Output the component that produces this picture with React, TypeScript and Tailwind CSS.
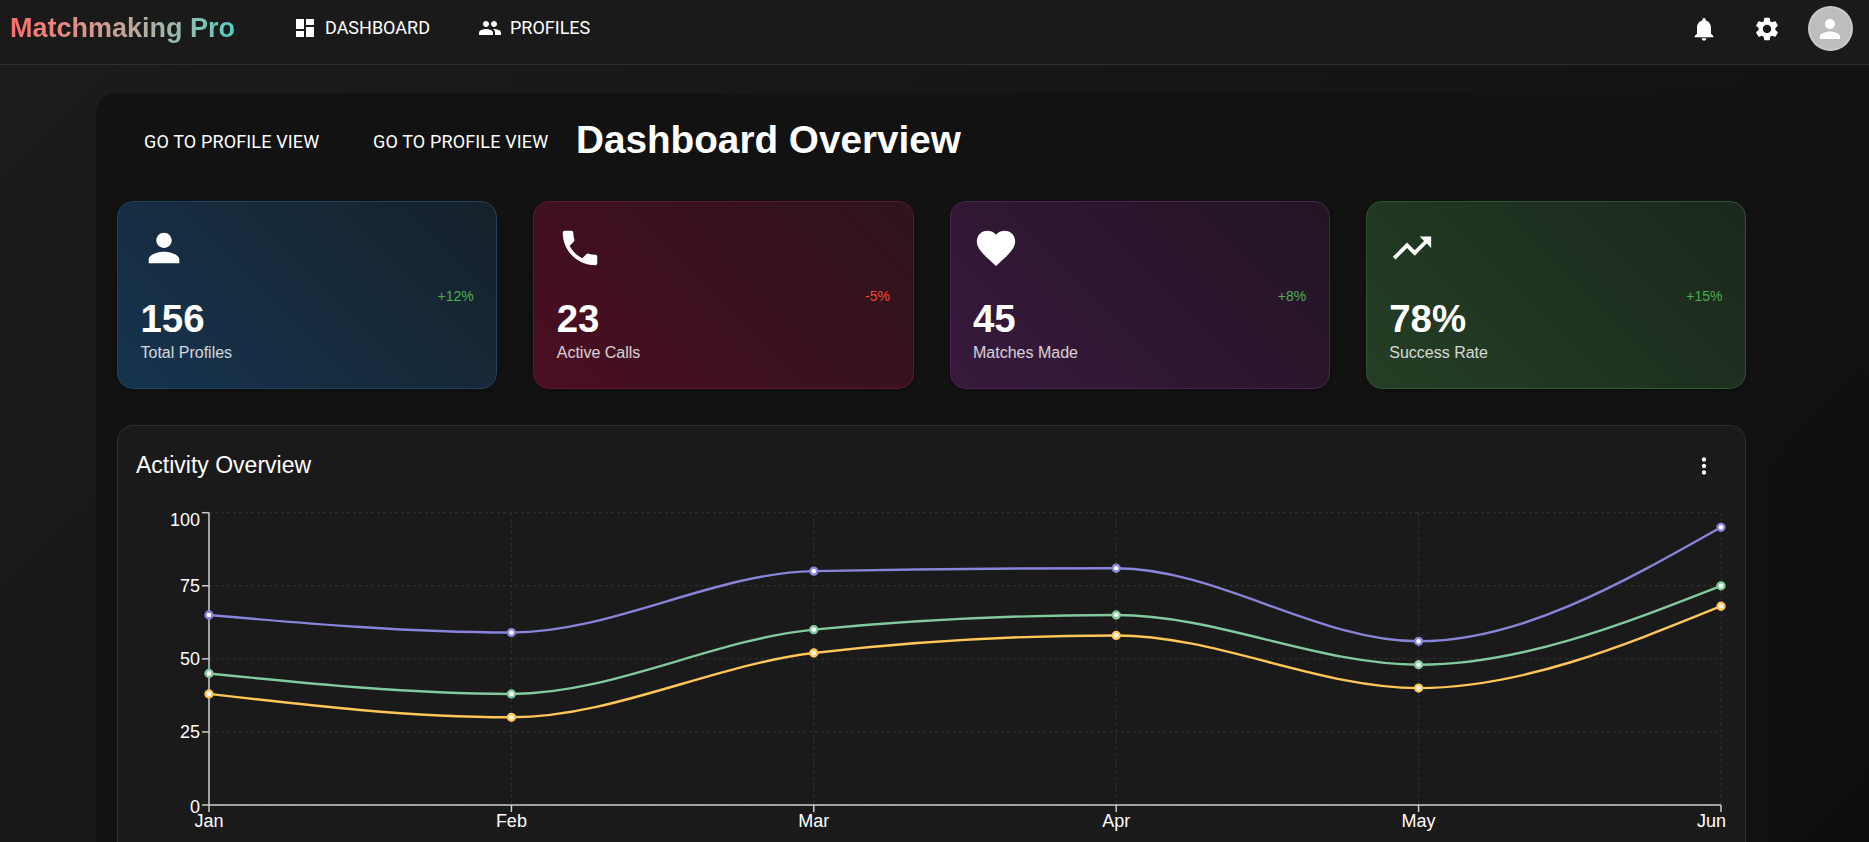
import React from "react";
import {
  MdDashboard,
  MdPeople,
  MdNotifications,
  MdSettings,
  MdPerson,
  MdPhone,
  MdFavorite,
  MdTrendingUp,
  MdMoreVert,
} from "react-icons/md";

const months = ["Jan", "Feb", "Mar", "Apr", "May", "Jun"];
const series = [
  { color: "#8884d8", values: [65, 59, 80, 81, 56, 95] },
  { color: "#82ca9d", values: [45, 38, 60, 65, 48, 75] },
  { color: "#ffc658", values: [38, 30, 52, 58, 40, 68] },
];

const left = 91;
const right = 1603;
const top = 12.7;
const bottom = 305;
const xAt = (i: number) => left + ((right - left) / 5) * i;
const yAt = (v: number) => bottom - ((bottom - top) * v) / 100;

// same curve as d3's curveMonotoneX
function monotonePath(points: [number, number][]) {
  const n = points.length;
  const t: number[] = [];
  for (let i = 1; i < n - 1; i++) {
    const h0 = points[i][0] - points[i - 1][0];
    const h1 = points[i + 1][0] - points[i][0];
    const s0 = (points[i][1] - points[i - 1][1]) / h0;
    const s1 = (points[i + 1][1] - points[i][1]) / h1;
    const p = (s0 * h1 + s1 * h0) / (h0 + h1);
    t[i] =
      (Math.sign(s0) + Math.sign(s1)) *
        Math.min(Math.abs(s0), Math.abs(s1), 0.5 * Math.abs(p)) || 0;
  }
  const slope = (a: number, b: number) => (points[b][1] - points[a][1]) / (points[b][0] - points[a][0]);
  t[0] = (3 * slope(0, 1) - t[1]) / 2;
  t[n - 1] = (3 * slope(n - 2, n - 1) - t[n - 2]) / 2;
  let d = `M${points[0][0]},${points[0][1]}`;
  for (let i = 1; i < n; i++) {
    const dx = (points[i][0] - points[i - 1][0]) / 3;
    d += `C${points[i - 1][0] + dx},${points[i - 1][1] + dx * t[i - 1]},${points[i][0] - dx},${points[i][1] - dx * t[i]},${points[i][0]},${points[i][1]}`;
  }
  return d;
}

const Chart = () => (
  <svg width={1627} height={345} className="block" fontFamily="'Liberation Sans', Arial, sans-serif" fontSize={18}>
    <g stroke="#333333" strokeDasharray="3 3" fill="none">
      {[100, 75, 50, 25, 0].map((v) => (
        <line key={v} x1={left} x2={right} y1={yAt(v)} y2={yAt(v)} />
      ))}
      {months.map((m, i) => (
        <line key={m} x1={xAt(i)} x2={xAt(i)} y1={top} y2={bottom} />
      ))}
    </g>
    <g stroke="#cccccc" strokeWidth={1.5} fill="none">
      <line x1={left} x2={left} y1={top} y2={bottom} />
      <line x1={left} x2={right} y1={bottom} y2={bottom} />
      {[100, 75, 50, 25, 0].map((v) => (
        <line key={v} x1={left - 7} x2={left} y1={yAt(v)} y2={yAt(v)} />
      ))}
      {months.map((m, i) => (
        <line key={m} x1={xAt(i)} x2={xAt(i)} y1={bottom} y2={bottom + 7} />
      ))}
    </g>
    <g fill="#ffffff">
      {[100, 75, 50, 25, 0].map((v) => (
        <text key={v} x={left - 9} y={(v === 100 ? yAt(v) + 7 : v === 0 ? yAt(v) + 1 : yAt(v)) + 6.5} textAnchor="end">
          {v}
        </text>
      ))}
      {months.map((m, i) => (
        <text key={m} x={i === 5 ? right + 5 : xAt(i)} y={bottom + 22} textAnchor={i === 5 ? "end" : "middle"}>
          {m}
        </text>
      ))}
    </g>
    {series.map((s) => {
      const points = s.values.map((v, i): [number, number] => [xAt(i), yAt(v)]);
      return (
        <g key={s.color}>
          <path d={monotonePath(points)} fill="none" stroke={s.color} strokeWidth={2.4} />
          {points.map(([x, y]) => (
            <circle key={x} cx={x} cy={y} r={3.5} fill="#ffffff" stroke={s.color} strokeWidth={2.3} />
          ))}
        </g>
      );
    })}
  </svg>
);

type StatProps = {
  icon: React.ReactNode;
  value: string;
  label: string;
  change: string;
  bad?: boolean;
  className: string;
};

const StatCard = ({ icon, value, label, change, bad, className }: StatProps) => (
  <div className={`h-[188px] rounded-2xl border px-[22.5px] pt-[23px] shadow-md ${className}`}>
    <div className="h-[46px] text-[46px] text-white">{icon}</div>
    <p className={`mt-[17px] text-right text-sm leading-[16px] ${bad ? "text-[#f44336]" : "text-[#4caf50]"}`}>{change}</p>
    <p className="text-[38.4px] leading-[30px] font-bold text-white">{value}</p>
    <p className="mt-[9px] text-base leading-[20px] text-white/80">{label}</p>
  </div>
);

const App: React.FC = () => {
  return (
    <div className="h-screen overflow-hidden bg-[linear-gradient(135deg,#1c1c1c,#0e0e0e)] font-['Liberation_Sans',Arial,sans-serif] text-white">
      <header className="flex h-[65px] items-center border-b border-[#2e2e2e] bg-[#1a1a1a] pr-[16.5px] pl-[10px]">
        <h2 className="w-[283px] pb-[8px] text-[27px] font-bold">
          <span className="inline-block bg-linear-to-r from-[#ff6b6b] to-[#4ecdc4] bg-clip-text text-transparent">
            Matchmaking Pro
          </span>
        </h2>
        <nav className="flex pb-[9px] font-['Roboto',sans-serif] text-[18px] uppercase">
          <a className="flex w-[185px] items-center gap-[8px]">
            <MdDashboard className="text-[24px]" />
            Dashboard
          </a>
          <a className="flex items-center gap-[8px]">
            <MdPeople className="text-[24px]" />
            Profiles
          </a>
        </nav>
        <div className="ml-auto flex items-center pb-[7px]">
          <MdNotifications className="text-[28px]" />
          <MdSettings className="ml-[35px] text-[28px]" />
          <div className="ml-[26.5px] flex h-[45px] w-[45px] items-center justify-center rounded-full border-2 border-white/20 bg-[#bdbdbd]">
            <MdPerson className="text-[30px]" />
          </div>
        </div>
      </header>

      <main className="pt-[28px] pl-[96px]">
        <div className="w-[1672px] rounded-t-[20px] bg-[#121212] pt-[19px] pr-[22px] pl-[21px]">
          <div className="flex h-[56px] items-center pl-[27px] font-['Roboto',sans-serif] text-[18px] tracking-[0.14px] uppercase">
            <span className="w-[229px] pt-[3px]">Go to profile view</span>
            <span className="w-[203px] pt-[3px]">Go to profile view</span>
            <h1 className="font-['Liberation_Sans',Arial,sans-serif] text-[38.7px] font-bold tracking-normal normal-case">
              Dashboard Overview
            </h1>
          </div>
          <div className="mt-[33px] grid grid-cols-4 gap-[36px]">
            <StatCard
              icon={<MdPerson />}
              value="156"
              label="Total Profiles"
              change="+12%"
              className="border-[#1e4461] bg-[linear-gradient(45deg,#16344f,#16212a)]"
            />
            <StatCard
              icon={<MdPhone />}
              value="23"
              label="Active Calls"
              change="-5%"
              bad
              className="border-[#5c1a2e] bg-[linear-gradient(45deg,#4a0e22,#2e141b)]"
            />
            <StatCard
              icon={<MdFavorite />}
              value="45"
              label="Matches Made"
              change="+8%"
              className="border-[#4a2450] bg-[linear-gradient(45deg,#38193d,#231423)]"
            />
            <StatCard
              icon={<MdTrendingUp />}
              value="78%"
              label="Success Rate"
              change="+15%"
              className="border-[#2f5230] bg-[linear-gradient(45deg,#243f25,#1b271c)]"
            />
          </div>
          <section className="mt-[36px] rounded-2xl border border-[#2e2e2e] bg-[#1a1a1a] pb-[40px]">
            <div className="flex h-[74px] items-center justify-between pt-[5px] pr-[28px] pl-[18px]">
              <h3 className="text-[23px]">Activity Overview</h3>
              <MdMoreVert className="text-[26px]" />
            </div>
            <Chart />
          </section>
        </div>
      </main>
    </div>
  );
};

export default App;
